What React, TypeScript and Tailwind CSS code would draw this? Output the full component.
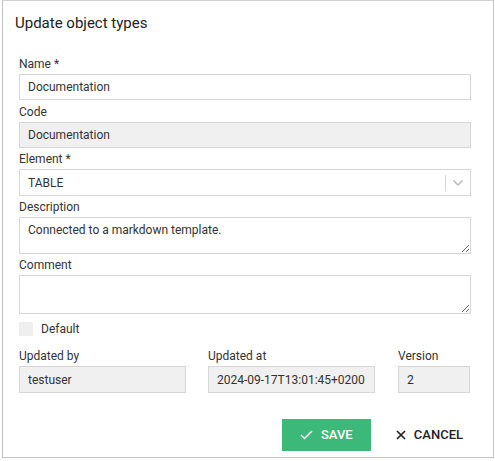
import React from 'react';

const font = { fontFamily: 'Roboto, "Noto Sans", sans-serif' };

const Label: React.FC<{ children: React.ReactNode; top?: string }> = ({ children, top = 'mt-[4px]' }) => (
  <div className={`${top} mb-[2px] text-[12px] leading-[16px] text-[#333]`}>{children}</div>
);

const inputBase =
  'block w-full border border-[#d6d6d6] px-[8px] text-[12px] text-[#333] outline-none';

export default function App() {
  return (
    <div className="w-[495px] h-[461px] bg-white" style={font}>
      <div className="ml-[2px] w-[492px] h-[458px] border border-[#c4c4c4] border-t-[#d0d0d0] bg-white">
        <div className="px-[12px] pt-[13px] text-[15px] leading-[18px] text-[#222]">Update object types</div>
        <div className="pl-[16px] pr-[22px] pt-[20px]">
          <Label>Name *</Label>
          <input className={`${inputBase} h-[26px] bg-white`} defaultValue="Documentation" />
          <Label>Code</Label>
          <input className={`${inputBase} h-[26px] bg-[#f0f0f0]`} defaultValue="Documentation" readOnly />
          <Label top="mt-[3px]">Element *</Label>
          <div className="flex h-[27px] items-center border border-[#d6d6d6] bg-white">
            <span className="flex-1 pl-[8px] text-[12px] text-[#333]">TABLE</span>
            <span className="h-[16px] w-px bg-[#d6d6d6]" />
            <span className="flex w-[24px] justify-center">
              <svg width="12" height="8" viewBox="0 0 12 8" fill="none">
                <path d="M1.5 1.5 L6 6 L10.5 1.5" stroke="#b8b8b8" strokeWidth="1.5" />
              </svg>
            </span>
          </div>
          <Label top="mt-[3px]">Description</Label>
          <textarea
            className={`${inputBase} h-[37px] resize-y bg-white py-[4px] leading-[16px]`}
            defaultValue="Connected to a markdown template."
          />
          <Label top="mt-[3px]">Comment</Label>
          <textarea className={`${inputBase} h-[39px] resize-y bg-white py-[4px] leading-[16px]`} defaultValue="" />
          <div className="mt-[8px] flex items-center gap-[8px]">
            <span className="h-[14px] w-[14px] bg-[#efefef]" />
            <span className="text-[12px] leading-[14px] text-[#333]">Default</span>
          </div>
          <div className="mt-[8px] flex">
            <div className="w-[167px]">
              <Label>Updated by</Label>
              <input className={`${inputBase} h-[27px] bg-[#f0f0f0]`} defaultValue="testuser" readOnly />
            </div>
            <div className="ml-[22px] w-[167px]">
              <Label>Updated at</Label>
              <input
                className={`${inputBase} h-[27px] bg-[#f0f0f0]`}
                defaultValue="2024-09-17T13:01:45+0200"
                readOnly
              />
            </div>
            <div className="ml-[23px] w-[72px]">
              <Label>Version</Label>
              <input className={`${inputBase} h-[27px] bg-[#f0f0f0]`} defaultValue="2" readOnly />
            </div>
          </div>
          <div className="mt-[26px] flex items-center justify-end gap-[25px] pr-[8px]">
            <button className="flex h-[32px] w-[89px] items-center justify-center gap-[8px] bg-[#3cb878] text-[13px] font-medium text-white">
              <svg width="13" height="10" viewBox="0 0 13 10" fill="none">
                <path d="M1 5 L4.5 8.5 L12 1" stroke="white" strokeWidth="1.5" />
              </svg>
              SAVE
            </button>
            <button className="flex h-[32px] items-center gap-[8px] text-[13px] font-medium text-[#222]">
              <svg width="10" height="10" viewBox="0 0 10 10" fill="none">
                <path d="M1 1 L9 9 M9 1 L1 9" stroke="#222" strokeWidth="1.7" />
              </svg>
              CANCEL
            </button>
          </div>
        </div>
      </div>
    </div>
  );
}
